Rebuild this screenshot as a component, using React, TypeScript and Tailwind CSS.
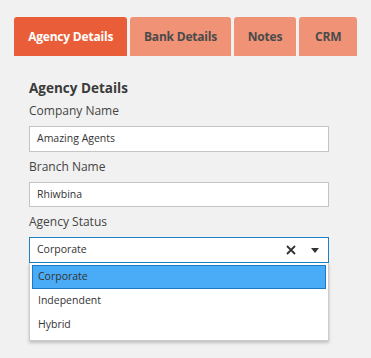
const TABS = ['Agency Details', 'Bank Details', 'Notes', 'CRM'];
const OPTIONS = ['Corporate', 'Independent', 'Hybrid'];

export default function App() {
  return (
    <div
      className="w-[371px] h-[358px] bg-[#f1f1f1] text-[#333] pt-[17px] px-[14px]"
      style={{ fontFamily: '"Open Sans", sans-serif' }}
    >
      {/* Tabs */}
      <div className="flex gap-[3px]">
        {TABS.map((t, i) => (
          <div
            key={t}
            className={
              i === 0
                ? 'h-[39px] w-[114px] rounded-t-[3px] bg-[#e95e38] text-white font-bold text-[12px] tracking-[-0.2px] flex items-center justify-center'
                : 'h-[39px] rounded-t-[3px] bg-[#f09276] text-[#4a4a4a] font-bold text-[12px] tracking-[-0.2px] flex items-center justify-center ' +
                  (i === 1 ? 'w-[101px]' : i === 2 ? 'w-[63px]' : 'w-[58px]')
            }
          >
            {t}
          </div>
        ))}
      </div>

      {/* Form */}
      <div className="pl-[15px] pt-[22px] w-[315px]">
        <p className="text-[13.5px] font-bold text-[#3a3a3a] leading-[20px]">Agency Details</p>
        <p className="text-[12px] text-[#444] mt-[3px] leading-[20px]">Company Name</p>
        <div className="mt-[5px] h-[26px] bg-white border border-[#c4c4c4] flex items-center px-[7px] text-[10.5px]">
          Amazing Agents
        </div>
        <p className="text-[12px] text-[#444] mt-[5px] leading-[20px]">Branch Name</p>
        <div className="mt-[5px] h-[25px] bg-white border border-[#c4c4c4] flex items-center px-[7px] text-[10.5px]">
          Rhiwbina
        </div>
        <p className="text-[12px] text-[#444] mt-[5px] leading-[20px]">Agency Status</p>

        <div className="mt-[5px] relative">
          <div className="h-[26px] bg-white border border-[#1f7fc4] flex items-center pl-[7px] pr-[9px] text-[10.5px]">
            <span className="flex-1">Corporate</span>
            <svg width="10" height="10" viewBox="0 0 10 10" className="mr-[15px]">
              <path d="M1 1L9 9M9 1L1 9" stroke="#333" strokeWidth="1.8" />
            </svg>
            <svg width="8" height="5" viewBox="0 0 8 5">
              <path d="M0 0H8L4 5Z" fill="#333" />
            </svg>
          </div>
          <div className="bg-white border border-[#ccc] border-t-0 shadow-[0_2px_3px_rgba(0,0,0,0.2)] px-[2px] pt-[2px] pb-[3px] text-[10.5px]">
            {OPTIONS.map((o, i) => (
              <div
                key={o}
                className={
                  i === 0
                    ? 'h-[24px] flex items-center px-[5px] bg-[#4aabf7] border border-[#1b7ac3]'
                    : 'h-[24px] flex items-center px-[6px]'
                }
              >
                {o}
              </div>
            ))}
          </div>
        </div>
      </div>
    </div>
  );
}
